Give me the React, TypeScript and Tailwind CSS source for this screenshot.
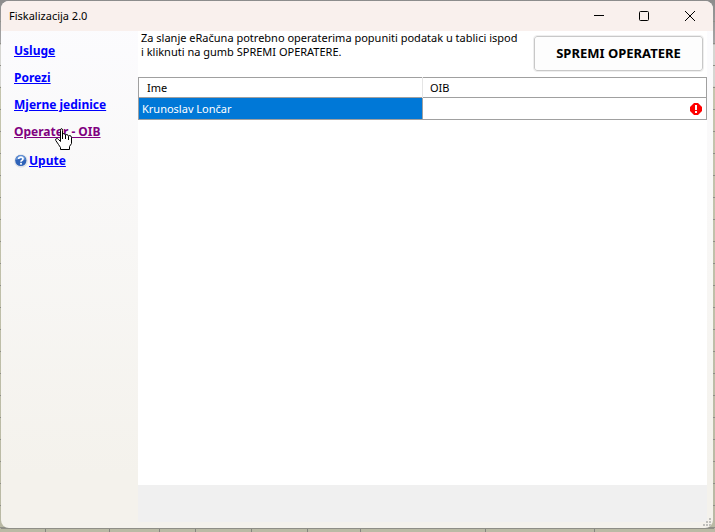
import { useState } from "react";

const columnMarks = [
    "w-[45px]",
    "w-[64px]",
    "w-[50px]",
    "w-[36px]",
    "w-[56px]",
    "w-[56px]",
    "w-[53px]",
    "w-[125px]",
    "w-[109px]",
];

function HelpIcon() {
    return (
        <svg width="14" height="14" viewBox="0 0 14 14" aria-hidden="true">
            <circle cx="7" cy="7" r="6.8" fill="#dfe2e8" />
            <circle cx="6.8" cy="6.5" r="5.6" fill="#2f63b8" />
            <path d="M1.800 6a5 5 0 0 1 10 0Q7 4 1.800 6Z" fill="#6593d6" />
            <path d="M4.600 5Q4.800 3 6.900 3Q9 3.100 9 4.800Q8.900 5.800 7.800 6.400Q7 6.800 7 7.800" fill="none" stroke="#fff" strokeWidth="1.700" />
            <rect x="6.100" y="8.800" width="1.800" height="1.800" fill="#fff" />
        </svg>
    );
}

function HandCursor() {
    return (
        <svg className="absolute left-[41px] top-[6px]" width="17" height="22" viewBox="0 0 17 22" aria-hidden="true">
            <path
                d="M5.500 13.500V2.500Q5.500 .5 6.500 .5T7.500 2.500V6.500Q8 5.500 9 5.500T10.500 7.500Q11 6.500 12 6.500T13.500 8.500Q14 7.500 15 7.500T16.500 9.500V15.500L14.500 18.500V21.500H5.500V19.500L3.500 16.500L.8 12.500Q.3 10.500 1.500 10.500Q2.500 10.200 3.500 11.500L5.500 13.500"
                fill="#fff"
                stroke="#000"
            />
            <path d="M7.500 6V11M10.500 7V11M13.500 8.500V12" stroke="#000" />
        </svg>
    );
}

function TitleBar() {
    return (
        <header className="flex h-[30px] shrink-0 items-center justify-between bg-[#f9f0ed] pl-2">
            <h1 className="text-[11px] text-black">Fiskalizacija 2.0</h1>
            <div className="flex h-full">
                <button type="button" aria-label="Minimize" className="flex w-[45px] items-center justify-center">
                    <svg width="10" height="10" viewBox="0 0 10 10">
                        <path d="M0 4.500H10" stroke="#000" />
                    </svg>
                </button>
                <button type="button" aria-label="Maximize" className="flex w-[45px] items-center justify-center">
                    <svg width="10" height="10" viewBox="0 0 10 10">
                        <rect x=".5" y=".5" width="9" height="9" rx="1" fill="none" stroke="#000" />
                    </svg>
                </button>
                <button type="button" aria-label="Close" className="flex w-[47px] items-center justify-center">
                    <svg width="10" height="10" viewBox="0 0 10 10">
                        <path d="M0 0L10 10M10 0L0 10" stroke="#000" />
                    </svg>
                </button>
            </div>
        </header>
    );
}

function Sidebar() {
    return (
        <nav className="w-[137px] shrink-0 pl-[13px] pt-[10px] text-[12px] leading-[19px] font-bold text-[#0000ff]">
            <ul className="flex flex-col gap-2">
                <li><a href="#usluge" className="underline">Usluge</a></li>
                <li><a href="#porezi" className="underline">Porezi</a></li>
                <li><a href="#jedinice" className="whitespace-nowrap underline">Mjerne jedinice</a></li>
                <li className="relative">
                    <a href="#operater" className="whitespace-nowrap text-[#800080] underline">Operater - OIB</a>
                    <HandCursor />
                </li>
                <li className="flex items-center gap-px pt-[2px]">
                    <HelpIcon />
                    <a href="#upute" className="underline">Upute</a>
                </li>
            </ul>
        </nav>
    );
}

function OperatorTable() {
    const [oib, setOib] = useState("");

    return (
        <table className="w-full table-fixed border-collapse border border-[#a0a0a0] bg-white text-left text-[11px]">
            <thead>
                <tr className="h-[20px]">
                    <th className="border-r border-[#e5e5e5] pl-2 pt-[2px] font-normal">Ime</th>
                    <th className="pl-[7px] pt-[2px] font-normal">OIB</th>
                </tr>
            </thead>
            <tbody>
                <tr className="h-[22px] border-t border-[#a0a0a0]">
                    <td className="border-r border-[#a0a0a0] bg-[#0078d7] pl-[3px] pt-[2px] text-white">Krunoslav Lončar</td>
                    <td>
                        <div className="flex items-center pr-1">
                            <input
                                type="text"
                                aria-label="OIB"
                                value={oib}
                                onChange={(e) => setOib(e.target.value)}
                                className="h-4 min-w-0 grow px-1 outline-none"
                            />
                            <svg width="12" height="12" viewBox="0 0 12 12" role="img" aria-label="OIB">
                                <path d="M4 0H8L12 4V8L8 12H4L0 8V4Z" fill="#f00" />
                                <path d="M5 2H7V7H5ZM5 8H7V10H5Z" fill="#fff" />
                            </svg>
                        </div>
                    </td>
                </tr>
            </tbody>
        </table>
    );
}

function App() {
    return (
        <div className="relative flex h-screen flex-col overflow-hidden bg-[repeating-linear-gradient(transparent_0px,transparent_21px,#8f8f87_21px,#8f8f87_22px),linear-gradient(#8c8c8c_0px,#a6a6a6_44px,#d6d6d2_45px,#d6d6d2_86px,#c5c5ae_87px,#b9b9a4_100%)] px-px pt-px font-['Noto_Sans',sans-serif] text-black">
            <div className="relative mr-px flex min-h-0 grow flex-col overflow-hidden rounded-lg bg-[linear-gradient(#fcfcff,#f4f2ec_90%)]">
                <TitleBar />
                <div className="flex min-h-0 grow pr-[6px] pb-[6px]">
                    <Sidebar />
                    <main className="flex min-w-0 grow flex-col bg-white">
                        <div className="flex h-[46px] shrink-0 justify-between pr-1">
                            <p className="pl-[3px] text-[11px] leading-[14px]">
                                Za slanje eRačuna potrebno operaterima popuniti podatak u tablici ispod
                                <br />
                                i kliknuti na gumb SPREMI OPERATERE.
                            </p>
                            <button
                                type="button"
                                className="mt-[5px] h-[35px] w-[169px] shrink-0 rounded-[3px] border border-[#c8c8c8] bg-[#fdfdfd] pt-px text-[13px] font-bold outline outline-[#eeeeee]"
                            >
                                SPREMI OPERATERE
                            </button>
                        </div>
                        <OperatorTable />
                        <div className="grow" />
                        <footer className="h-[37px] shrink-0 bg-[#f0f0f0]" />
                    </main>
                </div>
                <svg className="absolute right-[2px] bottom-[2px]" width="8" height="8" viewBox="0 0 8 8" aria-hidden="true">
                    <path d="M6 0h2v2h-2zM3 3h2v2h-2zM6 3h2v2h-2zM0 6h2v2h-2zM3 6h2v2h-2zM6 6h2v2h-2z" fill="#bfbfbb" />
                </svg>
            </div>
            <div className="flex h-1 shrink-0 border-t border-[#8f8f87] bg-[#babaa5]">
                {columnMarks.map((width, i) => (
                    <span key={i} className={`${width} shrink-0 border-r border-[#858580]`} />
                ))}
            </div>
        </div>
    );
}

export default App;
